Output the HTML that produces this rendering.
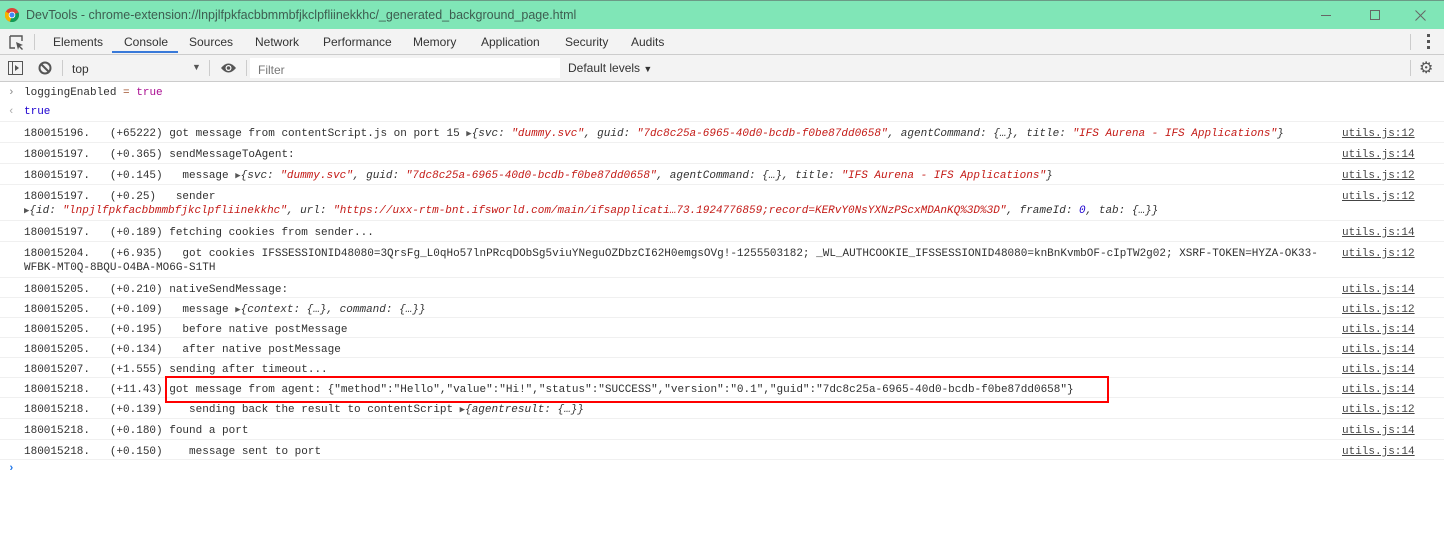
<!DOCTYPE html>
<html><head><meta charset="utf-8"><style>
*{margin:0;padding:0;box-sizing:border-box}
body{width:1444px;height:542px;overflow:hidden;background:#fff;font-family:"Liberation Sans",sans-serif;position:relative}
.title{position:absolute;left:0;top:0;width:1444px;height:29px;background:#80e6b7;border-top:1px solid #6b9a86}
.title .t{position:absolute;left:26px;top:7px;font-size:12.5px;color:#3d5d50}
.tabs{position:absolute;left:0;top:29px;width:1444px;height:26px;background:#f3f3f3;border-bottom:1px solid #ccc}
.tab{position:absolute;top:6px;font-size:12px;color:#333}
.tb{position:absolute;left:0;top:55px;width:1444px;height:27px;background:#f3f3f3;border-bottom:1px solid #ccc}
.mono{font-family:"Liberation Mono",monospace;font-size:11px;color:#303030}
.row{position:absolute;left:0;width:1444px;border-bottom:1px solid #f0f0f0;white-space:pre}
.row .m{position:absolute;left:24px;top:5px;line-height:14px}
.row .l{position:absolute;left:1342px;top:5px;line-height:14px;text-decoration:underline;color:#444}
.s{color:#c41a16;font-style:italic}
.i{font-style:italic;color:#333}
.n{color:#1c00cf;font-style:italic}
.tri{font-size:9px;color:#555;font-style:normal}
</style></head><body>
<div class="title">
<svg style="position:absolute;left:5px;top:7px" width="14" height="14" viewBox="0 0 14 14"><circle cx="7" cy="7" r="7" fill="#db4437"/><path d="M7 7 L13.5 4.5 A7 7 0 0 1 5 13.7Z" fill="#0f9d58"/><path d="M7 7 L5 13.7 A7 7 0 0 1 0.6 3.5Z" fill="#f4b400"/><circle cx="7" cy="7" r="3.3" fill="#fff"/><circle cx="7" cy="7" r="2.5" fill="#4285f4"/></svg>
<div class="t">DevTools - chrome-extension://lnpjlfpkfacbbmmbfjkclpfliinekkhc/_generated_background_page.html</div>
<div style="position:absolute;left:1321px;top:14px;width:10px;height:1px;background:#666"></div>
<div style="position:absolute;left:1370px;top:9px;width:10px;height:10px;border:1px solid #666"></div>
<svg style="position:absolute;left:1415px;top:9px" width="11" height="11"><path d="M0.5 0.5L10.5 10.5M10.5 0.5L0.5 10.5" stroke="#666" stroke-width="1"/></svg>
</div>
<div class="tabs">
<svg style="position:absolute;left:9px;top:6px" width="16" height="16" viewBox="0 0 16 16"><path d="M1 1h12v5M1 1v12h5" fill="none" stroke="#555" stroke-width="1.4"/><path d="M7 7l7 3-3 1 3 3-1 1-3-3-1 3z" fill="#555"/></svg>
<div style="position:absolute;left:34px;top:5px;width:1px;height:16px;background:#ccc"></div>
<div class="tab" style="left:53px">Elements</div>
<div class="tab" style="left:124px">Console</div>
<div style="position:absolute;left:112px;top:22px;width:66px;height:2px;background:#3879d9"></div>
<div class="tab" style="left:189px">Sources</div>
<div class="tab" style="left:255px">Network</div>
<div class="tab" style="left:323px">Performance</div>
<div class="tab" style="left:413px">Memory</div>
<div class="tab" style="left:481px">Application</div>
<div class="tab" style="left:565px">Security</div>
<div class="tab" style="left:631px">Audits</div>
<div style="position:absolute;left:1410px;top:5px;width:1px;height:16px;background:#ccc"></div>
<div style="position:absolute;left:1427px;top:5px;width:3px;height:3px;background:#555;box-shadow:0 6px 0 #555,0 12px 0 #555"></div>
</div>
<div class="tb">
<svg style="position:absolute;left:8px;top:6px" width="15" height="14"><rect x="0.5" y="0.5" width="14" height="13" fill="none" stroke="#555"/><line x1="4.5" y1="0" x2="4.5" y2="14" stroke="#555"/><path d="M7 4l4 3-4 3z" fill="#555"/></svg>
<svg style="position:absolute;left:38px;top:6px" width="14" height="14"><circle cx="7" cy="7" r="5.5" fill="none" stroke="#555" stroke-width="2"/><line x1="3" y1="3" x2="11" y2="11" stroke="#555" stroke-width="2"/></svg>
<div style="position:absolute;left:62px;top:5px;width:1px;height:16px;background:#ccc"></div>
<div style="position:absolute;left:72px;top:7px;font-size:12px;color:#333">top</div>
<div style="position:absolute;left:192px;top:7px;font-size:9px;color:#555">▼</div>
<div style="position:absolute;left:209px;top:5px;width:1px;height:16px;background:#ccc"></div>
<svg style="position:absolute;left:220px;top:7px" width="17" height="12"><path d="M1 6Q8.5-3 16 6Q8.5 15 1 6Z" fill="#555"/><circle cx="8.5" cy="6" r="3" fill="#fff"/><circle cx="8.5" cy="6" r="1.8" fill="#555"/></svg>
<div style="position:absolute;left:246px;top:5px;width:1px;height:16px;background:#ccc"></div>
<div style="position:absolute;left:250px;top:3px;width:310px;height:20px;background:#fff"></div>
<div style="position:absolute;left:258px;top:8px;font-size:12px;color:#777">Filter</div>
<div style="position:absolute;left:568px;top:6px;font-size:12px;color:#333">Default levels <span style="font-size:9px">▼</span></div>
<div style="position:absolute;left:1410px;top:5px;width:1px;height:16px;background:#ccc"></div>
<div style="position:absolute;left:1419px;top:3px;font-size:16px;color:#555">⚙</div>
</div>
<div class="mono" style="position:absolute;left:8px;top:87px;color:#888">›</div>
<div class="mono" style="position:absolute;left:24px;top:87px">loggingEnabled <span style="color:#a0522d">=</span> <span style="color:#aa0d91">true</span></div>
<div class="mono" style="position:absolute;left:8px;top:106px;color:#aaa">‹</div>
<div class="mono" style="position:absolute;left:24px;top:106px;color:#1c00cf">true</div>
<div style="position:absolute;left:0;top:121px;width:1444px;height:1px;background:#f0f0f0"></div>
<div class="mono">
<div class="row" style="top:122px;height:21px"><div class="m">180015196.   (+65222) got message from contentScript.js on port 15 <span class="tri">▶</span><span class="i">{svc: <span class="s">"dummy.svc"</span>, guid: <span class="s">"7dc8c25a-6965-40d0-bcdb-f0be87dd0658"</span>, agentCommand: {…}, title: <span class="s">"IFS Aurena - IFS Applications"</span>}</span></div><div class="l">utils.js:12</div></div>
<div class="row" style="top:143px;height:21px"><div class="m">180015197.   (+0.365) sendMessageToAgent:</div><div class="l">utils.js:14</div></div>
<div class="row" style="top:164px;height:21px"><div class="m">180015197.   (+0.145)   message <span class="tri">▶</span><span class="i">{svc: <span class="s">"dummy.svc"</span>, guid: <span class="s">"7dc8c25a-6965-40d0-bcdb-f0be87dd0658"</span>, agentCommand: {…}, title: <span class="s">"IFS Aurena - IFS Applications"</span>}</span></div><div class="l">utils.js:12</div></div>
<div class="row" style="top:185px;height:36px"><div class="m">180015197.   (+0.25)   sender
<span class="tri">▶</span><span class="i">{id: <span class="s">"lnpjlfpkfacbbmmbfjkclpfliinekkhc"</span>, url: <span class="s">"https://uxx-rtm-bnt.ifsworld.com/main/ifsapplicati…73.1924776859;record=KERvY0NsYXNzPScxMDAnKQ%3D%3D"</span>, frameId: <span class="n">0</span>, tab: {…}}</span></div><div class="l">utils.js:12</div></div>
<div class="row" style="top:221px;height:21px"><div class="m">180015197.   (+0.189) fetching cookies from sender...</div><div class="l">utils.js:14</div></div>
<div class="row" style="top:242px;height:36px"><div class="m">180015204.   (+6.935)   got cookies IFSSESSIONID48080=3QrsFg_L0qHo57lnPRcqDObSg5viuYNeguOZDbzCI62H0emgsOVg!-1255503182; _WL_AUTHCOOKIE_IFSSESSIONID48080=knBnKvmbOF-cIpTW2g02; XSRF-TOKEN=HYZA-OK33-
WFBK-MT0Q-8BQU-O4BA-MO6G-S1TH</div><div class="l">utils.js:12</div></div>
<div class="row" style="top:278px;height:20px"><div class="m">180015205.   (+0.210) nativeSendMessage:</div><div class="l">utils.js:14</div></div>
<div class="row" style="top:298px;height:20px"><div class="m">180015205.   (+0.109)   message <span class="tri">▶</span><span class="i">{context: {…}, command: {…}}</span></div><div class="l">utils.js:12</div></div>
<div class="row" style="top:318px;height:20px"><div class="m">180015205.   (+0.195)   before native postMessage</div><div class="l">utils.js:14</div></div>
<div class="row" style="top:338px;height:20px"><div class="m">180015205.   (+0.134)   after native postMessage</div><div class="l">utils.js:14</div></div>
<div class="row" style="top:358px;height:20px"><div class="m">180015207.   (+1.555) sending after timeout...</div><div class="l">utils.js:14</div></div>
<div class="row" style="top:378px;height:20px"><div class="m">180015218.   (+11.43) got message from agent: {"method":"Hello","value":"Hi!","status":"SUCCESS","version":"0.1","guid":"7dc8c25a-6965-40d0-bcdb-f0be87dd0658"}</div><div class="l">utils.js:14</div></div>
<div class="row" style="top:398px;height:21px"><div class="m">180015218.   (+0.139)    sending back the result to contentScript <span class="tri">▶</span><span class="i">{agentresult: {…}}</span></div><div class="l">utils.js:12</div></div>
<div class="row" style="top:419px;height:21px"><div class="m">180015218.   (+0.180) found a port</div><div class="l">utils.js:14</div></div>
<div class="row" style="top:440px;height:20px"><div class="m">180015218.   (+0.150)    message sent to port</div><div class="l">utils.js:14</div></div>
</div>
<div class="mono" style="position:absolute;left:8px;top:463px;color:#1a73e8;font-weight:bold">›</div>
<div style="position:absolute;left:165px;top:376px;width:944px;height:27px;border:2.5px solid #f00"></div>
</body></html>
